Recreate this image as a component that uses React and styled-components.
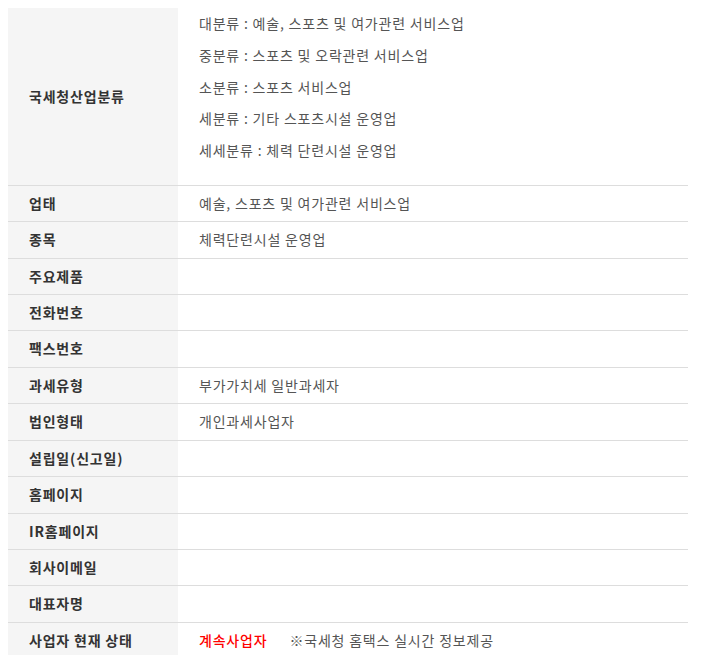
import React from "react";
import styled, { createGlobalStyle } from "styled-components";

const Global = createGlobalStyle`
  body { margin: 8px; background: #fff; font-family: "Noto Sans CJK KR", "Noto Sans", sans-serif; }
`;

const Table = styled.div`
  width: 680px;
  margin-top: -1px;
  border-top: 1px solid #ddd;
  font-size: 14px;
`;

const Row = styled.div`
  display: grid;
  grid-template-columns: 170px 1fr;
  border-bottom: 1px solid #ddd;
`;

const Label = styled.div`
  background: #f5f5f5;
  color: #333;
  font-weight: 700;
  padding: 7px 21px;
  line-height: 21.42px;
  display: flex;
  align-items: center;
  letter-spacing: 0.8px;
`;

const Value = styled.div`
  color: #555;
  padding: ${(p) => (p.$multi ? "0 21px 18px" : "7px 21px")};
  line-height: ${(p) => (p.$multi ? "31.75px" : "21.42px")};
  display: flex;
  flex-direction: column;
  justify-content: center;
  letter-spacing: 0.8px;
`;

const Inline = styled.div`
  display: flex;
  gap: 22px;
`;

const Status = styled.span`
  color: #ff0000;
  font-weight: 500;
`;

const classes = [
  "대분류 : 예술, 스포츠 및 여가관련 서비스업",
  "중분류 : 스포츠 및 오락관련 서비스업",
  "소분류 : 스포츠 서비스업",
  "세분류 : 기타 스포츠시설 운영업",
  "세세분류 : 체력 단련시설 운영업",
];

const rows = [
  ["업태", "예술, 스포츠 및 여가관련 서비스업"],
  ["종목", "체력단련시설 운영업"],
  ["주요제품", ""],
  ["전화번호", ""],
  ["팩스번호", ""],
  ["과세유형", "부가가치세 일반과세자"],
  ["법인형태", "개인과세사업자"],
  ["설립일(신고일)", ""],
  ["홈페이지", ""],
  ["IR홈페이지", ""],
  ["회사이메일", ""],
  ["대표자명", ""],
];

export default function App() {
  return (
    <>
      <Global />
      <Table>
        <Row>
          <Label>국세청산업분류</Label>
          <Value $multi>
            {classes.map((c) => (
              <div key={c}>{c}</div>
            ))}
          </Value>
        </Row>
        {rows.map(([k, v]) => (
          <Row key={k}>
            <Label>{k}</Label>
            <Value>{v || "\u00a0"}</Value>
          </Row>
        ))}
        <Row>
          <Label>사업자 현재 상태</Label>
          <Value>
            <Inline>
              <Status>계속사업자</Status>
              <span>※국세청 홈택스 실시간 정보제공</span>
            </Inline>
          </Value>
        </Row>
      </Table>
    </>
  );
}
